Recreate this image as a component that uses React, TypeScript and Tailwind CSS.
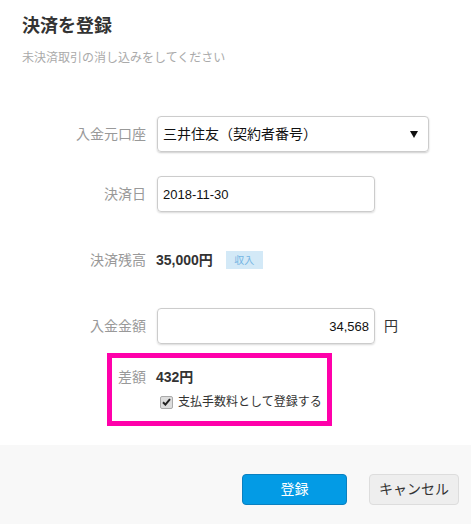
import { ChevronDown } from "lucide-react";

const font = "font-['Liberation_Sans','Noto_Sans_CJK_JP',sans-serif]";

function Label({ children }: { children: React.ReactNode }) {
  return <span className="w-[146px] shrink-0 text-right text-[14px] text-[#999]">{children}</span>;
}

export default function App() {
  return (
    <div className={`flex h-[524px] w-[471px] flex-col bg-white text-[#333] ${font}`}>
      <div className="px-[22px] pt-[14px]">
        <h2 className="text-[18px] font-bold leading-[24px] text-[#333]">決済を登録</h2>
        <p className="mt-[12px] text-[12px] leading-[16px] text-[#aaa]">
          未決済取引の消し込みをしてください
        </p>
      </div>

      <div className="mt-[50px] flex items-center">
        <Label>入金元口座</Label>
        <div className="ml-[11px] flex h-[36px] w-[272px] items-center justify-between rounded-[4px] border border-[#ccc] pl-[5px] pr-[10px] shadow-[0_1px_2px_rgba(0,0,0,0.2)]">
          <span className="text-[14px] text-[#111]">三井住友（契約者番号）</span>
          <svg width="8" height="7" viewBox="0 0 8 7" className="mt-[1px]">
            <path d="M0 0 H8 L4 7 Z" fill="#111" />
          </svg>
        </div>
      </div>

      <div className="mt-[24px] flex items-center">
        <Label>決済日</Label>
        <input
          readOnly
          value="2018-11-30"
          className="ml-[11px] h-[36px] w-[218px] rounded-[4px] border border-[#ccc] px-[5px] text-[13px] text-[#111] shadow-[0_1px_2px_rgba(0,0,0,0.15)] outline-none"
        />
      </div>

      <div className="mt-[30px] flex h-[36px] items-center">
        <Label>決済残高</Label>
        <span className="ml-[10px] text-[14px] font-bold text-[#333]">35,000円</span>
        <span className="ml-[13px] flex h-[18px] w-[37px] items-center justify-center bg-[#d3e9f7] text-[10px] text-[#75b5e3]">
          収入
        </span>
      </div>

      <div className="mt-[30px] flex items-center">
        <Label>入金金額</Label>
        <input
          readOnly
          value="34,568"
          className="ml-[11px] h-[36px] w-[218px] rounded-[4px] border border-[#ccc] px-[5px] text-right text-[13px] text-[#111] shadow-[0_1px_2px_rgba(0,0,0,0.15)] outline-none"
        />
        <span className="ml-[9px] text-[14px] text-[#333]">円</span>
      </div>

      <div className="ml-[107px] mt-[9px] h-[73px] w-[225px] border-[5px] border-[#ff00aa] pt-[9px]">
        <div className="flex h-[20px] items-center">
          <span className="w-[34px] text-right text-[14px] text-[#999]">差額</span>
          <span className="ml-[10px] text-[14px] font-bold text-[#333]">432円</span>
        </div>
        <div className="ml-[48px] mt-[6px] flex h-[18px] items-center">
          <span className="flex h-[13px] w-[13px] items-center justify-center rounded-[2px] border border-[#aaa] bg-[#ddd]">
            <svg width="9" height="8" viewBox="0 0 9 8">
              <path d="M1 4.2 L3.4 6.6 L8 1.2" stroke="#222" strokeWidth="2" fill="none" />
            </svg>
          </span>
          <span className="ml-[5px] text-[12px] text-[#333]">支払手数料として登録する</span>
        </div>
      </div>

      <div className="mt-[19px] flex flex-1 items-start justify-end gap-[22px] bg-[#f8f8f8] pr-[12px] pt-[29px]">
        <button
          type="button"
          className="h-[31px] w-[105px] rounded-[4px] border border-[#0a80c0] bg-[#039be5] text-[14px] text-white"
        >
          登録
        </button>
        <button
          type="button"
          className="h-[31px] w-[90px] rounded-[4px] border border-[#ddd] bg-[#eee] text-[14px] text-[#333]"
        >
          キャンセル
        </button>
      </div>
    </div>
  );
}
